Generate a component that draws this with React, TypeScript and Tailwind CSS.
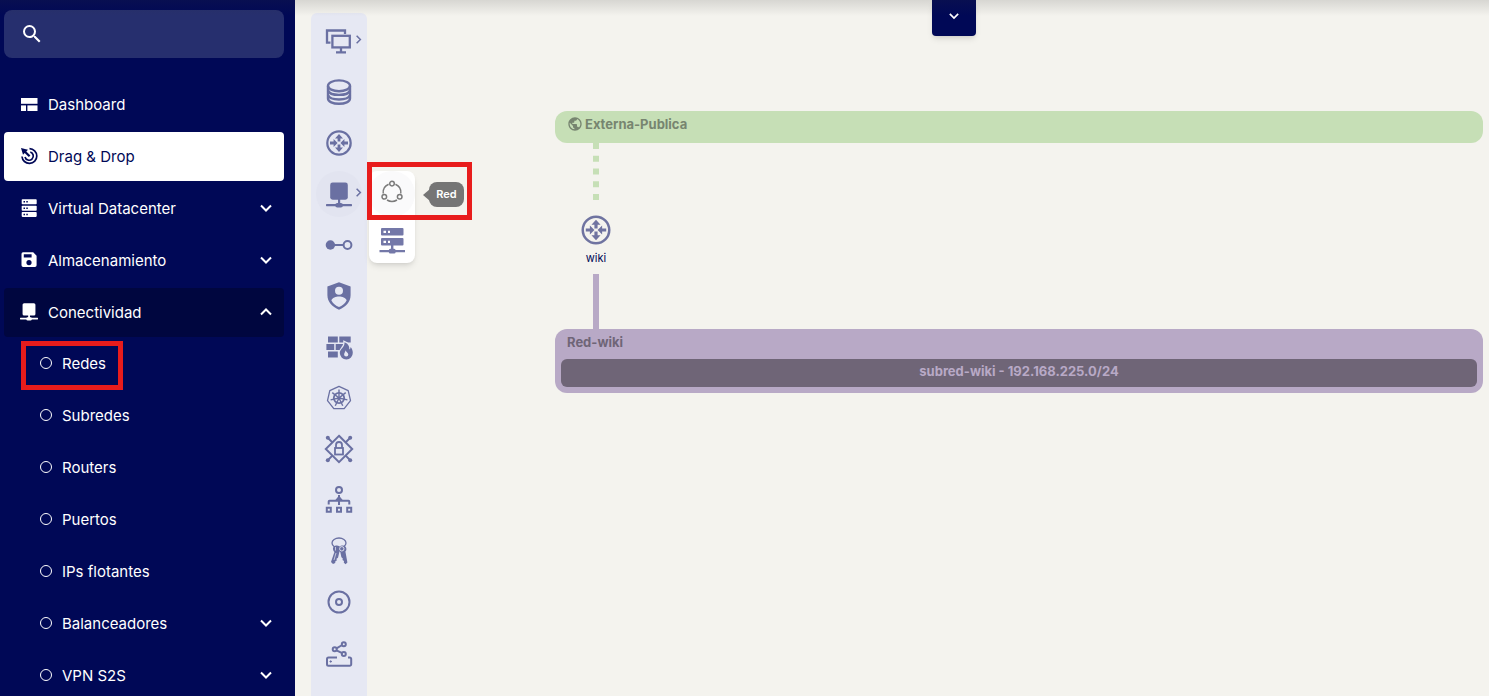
import { useState, type ReactNode } from 'react'
import { MdPublic, MdSearch } from 'react-icons/md'

type IconProps = { className?: string }

function Svg({ className, box = 30, children }: { className?: string; box?: number; children: ReactNode }) {
  return (
    <svg className={className} viewBox={`0 0 ${box} ${box}`} fill="none" stroke="currentColor" strokeWidth="2" aria-hidden="true">
      {children}
    </svg>
  )
}

function Chevron({ className }: IconProps) {
  return (
    <Svg className={className} box={12}>
      <path d="M1 3.5 6 8.5 11 3.5" />
    </Svg>
  )
}

/* ---------- sidebar icons ---------- */

function DashboardIcon() {
  return (
    <Svg className="size-[18px]" box={18}>
      <g fill="currentColor" stroke="none">
        <rect x="1" y="3" width="16.5" height="5.8" />
        <rect x="1" y="10.4" width="5" height="5.6" />
        <rect x="7.4" y="10.4" width="10.1" height="5.6" />
      </g>
    </Svg>
  )
}

function DragIcon() {
  return (
    <Svg className="size-[18px]" box={18}>
      <path d="M9.5 1.6A7.4 7.4 0 1 1 2 9.5" strokeWidth="1.7" />
      <path d="M10.3 5a4.2 4.2 0 1 1-5.3 5" strokeWidth="1.7" />
      <path d="M1 1 8 2.8 6.3 4.4 10.4 8.5 8.8 10.1 4.7 6 3 7.8Z" fill="currentColor" stroke="none" />
    </Svg>
  )
}

function ServersIcon() {
  return (
    <Svg className="size-[18px]" box={18}>
      {[0.3, 6.8, 13].map((y) => (
        <g key={y} stroke="none">
          <rect x="1.7" y={y} width="15" height="4.9" rx="0.8" fill="currentColor" />
          <path d={`M3.5 ${y + 1.7}h1.5v1.5h-1.5zM6.3 ${y + 1.7}h1.5v1.5h-1.5z`} fill="#000856" />
        </g>
      ))}
    </Svg>
  )
}

function SaveIcon() {
  return (
    <Svg className="size-[18px]" box={18}>
      <path
        d="M3 1.3H13.2L16.6 4.7V14.3a1.7 1.7 0 0 1-1.7 1.7H3.2a1.7 1.7 0 0 1-1.7-1.7V3A1.7 1.7 0 0 1 3 1.3ZM3.8 3.2V6.4H11.6V3.2ZM9 9A2.6 2.6 0 1 0 9 14.2 2.6 2.6 0 0 0 9 9Z"
        fill="currentColor"
        fillRule="evenodd"
        stroke="none"
      />
    </Svg>
  )
}

function NetworkIcon({ className }: IconProps) {
  return (
    <Svg className={className}>
      <g fill="currentColor" stroke="none">
        <rect x="6.2" y="3.5" width="17.6" height="17.2" rx="2.4" />
        <rect x="14" y="20" width="2.2" height="6" />
        <rect x="2" y="25" width="26" height="2.2" rx="0.6" />
        <rect x="11.3" y="24" width="7.6" height="4.4" rx="2" />
      </g>
    </Svg>
  )
}

// same drawing, cropped tighter for the menu
function NetworkMenuIcon() {
  return (
    <svg className="size-[18px]" viewBox="1 2 28 28" fill="currentColor" aria-hidden="true">
      <rect x="5" y="2.500" width="20" height="19" rx="2.400" />
      <rect x="13.700" y="20" width="2.800" height="6" />
      <rect x="1" y="25" width="28" height="2.600" rx="0.600" />
      <rect x="11" y="24" width="8.200" height="5.400" rx="2" />
    </svg>
  )
}

/* ---------- toolbar icons ---------- */

function InstancesIcon() {
  return (
    <Svg className="size-[30px]">
      <g strokeWidth="2.300">
        <path d="M6.500 16.600H3V4.500H21V8" />
        <rect x="8.400" y="9.800" width="17.400" height="11.600" />
        <path d="M17 21v5M12 26.400H22" />
      </g>
    </Svg>
  )
}

function DatabaseIcon() {
  return (
    <Svg className="size-[30px]">
      <g strokeWidth="2.400">
        <ellipse cx="15" cy="8.800" rx="11" ry="5.400" />
        <path d="M4 9v12.500c0 3.200 5 5.200 11 5.200s11-2 11-5.200V9" />
        <path d="M4 13.500c1 3 5.500 4.400 11 4.400s10-1.400 11-4.400M4 18.200c1 2.800 5.500 4.300 11 4.300s10-1.500 11-4.300" />
      </g>
    </Svg>
  )
}

function RouterIcon({ className }: IconProps) {
  return (
    <Svg className={className}>
      <circle cx="15" cy="15" r="11.700" strokeWidth="2.200" />
      <g fill="currentColor" stroke="none">
        <path d="M15 6 19 10.400H16.400V13.600H13.600V10.400H11Z" />
        <path d="M15 24 19 19.600H16.400V16.400H13.600V19.600H11Z" />
        <path d="M13.600 15 9.600 19V16.400H6V13.600H9.600V11Z" />
        <path d="M16.400 15 20.400 19V16.400H24V13.600H20.400V11Z" />
      </g>
    </Svg>
  )
}

function PortIcon() {
  return (
    <Svg className="size-[30px]">
      <circle cx="6.400" cy="15" r="4.700" fill="currentColor" stroke="none" />
      <path d="M10 15h9.500" />
      <circle cx="23.500" cy="15" r="3.900" />
    </Svg>
  )
}

function ShieldIcon() {
  return (
    <Svg className="size-[30px]">
      <path d="M15 1.300 26.600 5.500V14c0 6.700-4.400 11.700-11.600 14.700C7.800 25.700 3.400 20.700 3.400 14V5.500Z" fill="currentColor" stroke="none" />
      <circle cx="15" cy="9.700" r="4" fill="#e6e8f3" stroke="none" />
      <path d="M7.400 19.500C8 16.500 12 15.400 15 15.400s7 1.100 7.600 4.100C20.800 22.700 18.200 24.800 15 26 11.800 24.800 9.200 22.700 7.400 19.500Z" fill="#e6e8f3" stroke="none" />
    </Svg>
  )
}

function FirewallIcon() {
  return (
    <Svg className="size-[30px]">
      <g fill="currentColor" stroke="none">
        <path d="M4 4.500h9.800v6H4zM15.300 4.500h11.400v6H15.300zM2.400 12h7.800v6H2.400zM11.700 12h8.500v6h-8.500zM4 19.500h9.800v6H4z" />
        <path
          d="M20.500 10.200C25 12 25.500 15.500 25.300 17.500c1-.6 1.300-1.500 1.300-2.500 1.500 1.700 2.200 3.800 2.200 5.800a6.500 6.500 0 0 1-13 .3C15.800 16.500 21 15.500 20.500 10.200Z"
          stroke="#e6e8f3"
          strokeWidth="2.400"
          paintOrder="stroke"
        />
        <path d="M21.500 18.200c.2 1.600 2.800 2.200 2.800 4.300a2.100 2.100 0 0 1-4.200 0c0-1.600 1.300-2.100 1.400-4.300Z" fill="#e6e8f3" />
      </g>
    </Svg>
  )
}

function KubernetesIcon() {
  return (
    <Svg className="size-[30px]">
      <path d="M15 3.400 24.200 7.700 26.500 17.600 20.200 25.600H9.800L3.500 17.600 5.800 7.700Z" strokeWidth="1.300" strokeLinejoin="round" />
      <circle cx="15" cy="15" r="5.200" strokeWidth="1.800" />
      {[0, 1, 2, 3, 4, 5, 6].map((n) => (
        <path key={n} d="M15 15V6.400" strokeWidth="1.400" transform={`rotate(${(n * 360) / 7} 15 15)`} />
      ))}
      <circle cx="15" cy="15" r="1.600" fill="currentColor" stroke="none" />
    </Svg>
  )
}

function SecurityIcon() {
  return (
    <Svg className="size-[30px]">
      <path d="M15 1.800 28.200 15 15 28.200 1.800 15Z" />
      <path d="M4 4 8.600 8.600M26 4 21.400 8.600M4 26 8.600 21.400M26 26 21.400 21.400" />
      <g fill="currentColor" stroke="none">
        <circle cx="3.800" cy="3.800" r="2" />
        <circle cx="26.200" cy="3.800" r="2" />
        <circle cx="3.800" cy="26.200" r="2" />
        <circle cx="26.200" cy="26.200" r="2" />
      </g>
      <rect x="11" y="14" width="8" height="6.500" strokeWidth="1.800" />
      <path d="M12 14v-3a3 3 0 0 1 6 0v3" strokeWidth="1.800" />
    </Svg>
  )
}

function BalancerIcon() {
  return (
    <Svg className="size-[30px]">
      <circle cx="15" cy="5" r="3" />
      <path d="M15 10V20M4.700 19.500V16.500Q4.700 15.800 5.500 15.800H24.500Q25.300 15.800 25.300 16.500V19.500" />
      <path d="M15 10.500 19 15.600H11Z" fill="currentColor" stroke="none" />
      <path d="M2.800 22.800h4v4h-4zM13 22.800h4v4h-4zM23.200 22.800h4v4h-4z" />
    </Svg>
  )
}

function KeysIcon() {
  return (
    <Svg className="size-[30px]">
      <ellipse cx="15" cy="7" rx="7" ry="5" strokeWidth="1.300" />
      <path d="M12 9.500c-2.500.4-3.400 2.200-2.900 4.300.3 1.100.7 1.600 1.300 2.200L7 26l2 2 2.200-1 .2-1.800 1.400-.8-.3-1.700 1.500-1 1.500-6.200 1.500-3.300c-1-2-2.600-3-5-2.700Z" fill="currentColor" stroke="none" />
      <path d="M18 9.500c2.700-.3 4.500 1.300 4.400 3.500 0 1.300-.4 2-1 2.600l2 10.900-1.800 1.700-1.800-1.500.2-1.600-1.500-1 .3-1.600-1.400-1.200-1.100-5.300c-1.200-.8-1.700-2-1.500-3.300.3-1.700 1.500-3 3.200-3.200Z" fill="currentColor" stroke="none" />
      <circle cx="17.800" cy="12.800" r="2.200" stroke="#e6e8f3" strokeWidth="0.900" />
      <path d="M11.500 11v3.500M12 17 10 24" stroke="#e6e8f3" strokeWidth="0.700" />
    </Svg>
  )
}

function DiscIcon() {
  return (
    <Svg className="size-[30px]">
      <circle cx="15" cy="15" r="10.500" />
      <circle cx="15" cy="15" r="3" />
    </Svg>
  )
}

function SharedDriveIcon() {
  return (
    <Svg className="size-[30px]">
      <path d="M13 19.500H4.500A1.500 1.500 0 0 0 3 21v5.200a1.500 1.500 0 0 0 1.500 1.500H25.700a1.500 1.500 0 0 0 1.500-1.500V21a1.500 1.500 0 0 0-1.500-1.500H24" />
      <path d="M5.500 23.500h2.400M6.700 22.300v2.400" strokeWidth="1" />
      <path d="M12.500 10.300 18.200 7M12.500 12.400 18.200 15.200" />
      <circle cx="10.700" cy="11.300" r="2" />
      <circle cx="19.800" cy="6.200" r="2" />
      <circle cx="19.800" cy="16" r="2" />
    </Svg>
  )
}

function RedIcon() {
  return (
    <Svg className="size-[26px]" box={26}>
      <g strokeWidth="1.500">
        <circle cx="13" cy="3.600" r="2.300" />
        <circle cx="5.300" cy="16.800" r="2.300" />
        <circle cx="20.700" cy="16.800" r="2.300" />
        <path d="M9.600 4.300A9 9 0 0 0 4.200 13.500M16.400 4.300A9 9 0 0 1 21.800 13.500M8 20A9.500 9.500 0 0 0 18 20" />
      </g>
    </Svg>
  )
}

function SubnetIcon() {
  return (
    <Svg className="size-[30px]">
      <g fill="currentColor" stroke="none">
        <rect x="4" y="3" width="22.500" height="7.500" rx="1" />
        <rect x="4" y="13" width="22.500" height="7.500" rx="1" />
        <path d="M14 20h2.400v6H14zM2.500 25h25.500v2.200H2.500z" />
        <rect x="11.800" y="23.800" width="6.800" height="4.600" rx="1.500" />
      </g>
      <path d="M6.500 5.700H9v2.200H6.500zM11 5.700h2v2.200h-2zM6.500 15.700H9v2.200H6.500zM11 15.700h2v2.200h-2z" fill="#fff" stroke="none" />
    </Svg>
  )
}

/* ---------- data ---------- */

const mainItems = [
  { label: 'Dashboard', icon: <DashboardIcon /> },
  { label: 'Drag & Drop', icon: <DragIcon />, active: true },
  { label: 'Virtual Datacenter', icon: <ServersIcon />, expandable: true },
  { label: 'Almacenamiento', icon: <SaveIcon />, expandable: true },
]

const subItems = [
  { label: 'Redes', marked: true },
  { label: 'Subredes' },
  { label: 'Routers' },
  { label: 'Puertos' },
  { label: 'IPs flotantes' },
  { label: 'Balanceadores', expandable: true },
  { label: 'VPN S2S', expandable: true },
]

const tools = [
  { label: 'Instancias', icon: <InstancesIcon />, more: true },
  { label: 'Volumen', icon: <DatabaseIcon /> },
  { label: 'Router', icon: <RouterIcon className="size-[30px]" /> },
  { label: 'Conectividad', icon: <NetworkIcon className="size-[30px]" />, more: true, flyout: true },
  { label: 'Puerto', icon: <PortIcon /> },
  { label: 'Grupo de seguridad', icon: <ShieldIcon /> },
  { label: 'Firewall', icon: <FirewallIcon /> },
  { label: 'Kubernetes', icon: <KubernetesIcon /> },
  { label: 'VPN', icon: <SecurityIcon /> },
  { label: 'Balanceador', icon: <BalancerIcon /> },
  { label: 'Claves', icon: <KeysIcon /> },
  { label: 'Imagen', icon: <DiscIcon /> },
  { label: 'Disco compartido', icon: <SharedDriveIcon /> },
]

function Sidebar() {
  const [open, setOpen] = useState(true)

  return (
    <aside className="h-full w-[295px] shrink-0 overflow-hidden bg-[#000856] py-[10px] pr-[11px] pl-1 text-[15px] text-white">
      <label className="flex h-12 items-center gap-2 rounded-lg bg-[#262f6e] px-4">
        <MdSearch className="size-6 shrink-0" aria-hidden="true" />
        <input type="search" aria-label="Buscar" className="w-full bg-transparent outline-none" />
      </label>

      <nav className="mt-[22px]">
        <ul className="flex flex-col gap-[3px]">
          {mainItems.map((item) => (
            <li key={item.label}>
              <a
                href="#"
                className={`flex h-[49px] items-center gap-[10px] rounded pr-3 pb-[2px] pl-4 ${item.active ? 'bg-white text-[#000856]' : ''}`}
              >
                {item.icon}
                <span className="flex-1 pt-1">{item.label}</span>
                {item.expandable && <Chevron className="size-3" />}
              </a>
            </li>
          ))}
          <li>
            <button
              type="button"
              aria-expanded={open}
              onClick={() => setOpen(!open)}
              className="flex h-[49px] w-full items-center gap-[10px] rounded bg-[#00063f] pr-3 pb-[2px] pl-4 text-left"
            >
              <NetworkMenuIcon />
              <span className="flex-1 pt-1">Conectividad</span>
              <Chevron className={open ? 'size-3 rotate-180' : 'size-3'} />
            </button>
            {open && (
              <ul className="mt-[2px] flex flex-col gap-[3px]">
                {subItems.map((item) => (
                  <li key={item.label} className="relative">
                    <a href="#" className="flex h-[49px] items-center gap-[10px] pr-3 pb-[2px] pl-9">
                      <span className="size-3 rounded-full border border-white" />
                      <span className="flex-1 pt-1">{item.label}</span>
                      {item.expandable && <Chevron className="size-3" />}
                    </a>
                    {item.marked && (
                      <span className="absolute top-[2px] left-[17px] h-[49px] w-[102px] border-[5px] border-[#e81c1c]" />
                    )}
                  </li>
                ))}
              </ul>
            )}
          </li>
        </ul>
      </nav>
    </aside>
  )
}

function Flyout() {
  return (
    <div className="absolute top-[3px] left-[58px] z-10">
      <div className="flex w-[46px] flex-col rounded-lg bg-white shadow-md">
        <button type="button" aria-label="Red" className="flex h-[46px] items-start justify-center rounded-full bg-[#fafafb] pt-[9px] text-[#7b7b7b]">
          <RedIcon />
        </button>
        <button type="button" aria-label="Subred" className="flex h-[46px] items-center justify-center text-[#7478a8]">
          <SubnetIcon />
        </button>
      </div>
      <div role="tooltip" className="absolute top-[11px] left-[54px] flex items-center text-[#757575]">
        <svg className="h-3 w-[7px]" viewBox="0 0 7 12" fill="currentColor" aria-hidden="true">
          <path d="M0 6 7 0V12Z" />
        </svg>
        <span className="-ml-px flex h-[25px] w-[35px] items-center justify-center rounded-lg bg-[#757575] text-[11px] font-semibold text-white">
          Red
        </span>
      </div>
      <span className="absolute -top-[9px] -left-[2px] h-[58px] w-[105px] border-[5px] border-[#e81c1c]" />
    </div>
  )
}

function Toolbar() {
  return (
    <div className="mt-[13px] ml-4 w-14 shrink-0 rounded-t-md bg-[#e6e8f3] pt-[2px] text-[#6a70a2]">
      {tools.map((tool) => (
        <div key={tool.label} className="relative flex h-[51px] items-center justify-center">
          <button
            type="button"
            aria-label={tool.label}
            className={`flex size-[46px] items-center justify-center rounded-full ${tool.flyout ? 'bg-[#e2e4f0]' : ''}`}
          >
            {tool.icon}
          </button>
          {tool.more && <Chevron className="absolute top-5 right-1 size-[9px] -rotate-90" />}
          {tool.flyout && <Flyout />}
        </div>
      ))}
    </div>
  )
}

function Diagram() {
  return (
    <div className="mr-[6px] ml-[188px] min-w-0 flex-1 pt-[111px] text-[13px] leading-4 font-bold">
      <div className="flex h-8 items-start gap-[2px] rounded-xl bg-[#c6dfb6] px-3 pt-[5px] text-[#778570]">
        <MdPublic className="size-4" aria-hidden="true" />
        Externa-Publica
      </div>

      <div className="ml-[21px] flex w-10 flex-col items-center">
        <svg className="h-[57px] w-[6px]" viewBox="0 0 6 57" aria-hidden="true">
          <path d="M3 0V57" stroke="#c6dfb6" strokeWidth="6" strokeDasharray="6 6.75" />
        </svg>
        <RouterIcon className="mt-[13px] size-[34px] text-[#6f73a0]" />
        <span className="mt-[3px] text-[11px] font-normal text-[#000856]">wiki</span>
        <span className="mt-2 h-[55px] w-[6px] bg-[#b8a9c6]" />
      </div>

      <div className="h-16 rounded-xl bg-[#b8a9c6] px-[6px] pt-[5px] text-[#6f6577]">
        <p className="px-[6px]">Red-wiki</p>
        <p className="mt-[9px] h-7 rounded-md bg-[#6f6577] pt-1 text-center text-[#b8a9c6]">subred-wiki - 192.168.225.0/24</p>
      </div>
    </div>
  )
}

export default function App() {
  return (
    <div className="relative flex h-screen overflow-hidden bg-[#f4f3ee] font-['Inter',sans-serif]">
      <Sidebar />
      <main className="relative flex min-w-0 flex-1">
        <Toolbar />
        <Diagram />
        <button
          type="button"
          aria-label="Desplegar"
          className="absolute top-0 left-[637px] flex h-9 w-11 items-center justify-center rounded-b bg-[#000856] pb-1 text-white shadow-md"
        >
          <Chevron className="size-[10px]" />
        </button>
      </main>
      <div className="pointer-events-none absolute inset-x-0 top-0 h-4 bg-linear-to-b from-[#333333]/15 to-transparent" />
    </div>
  )
}
